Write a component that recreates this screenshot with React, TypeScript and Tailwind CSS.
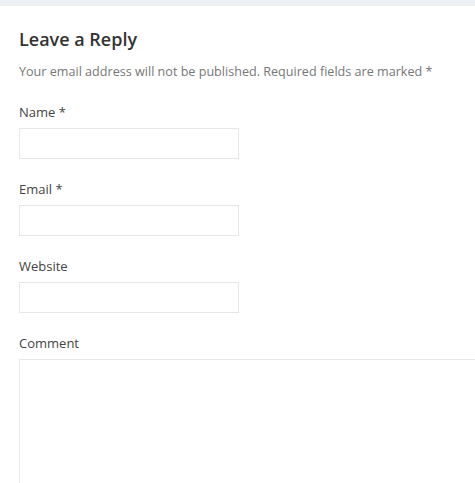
const fields = [
  { label: "Name", required: true },
  { label: "Email", required: true },
  { label: "Website", required: false },
];

export default function App() {
  const input = "block h-[31px] w-[220px] border border-[#e6e6e6] bg-white outline-none";

  return (
    <div className="min-h-[483px] overflow-hidden bg-white font-['Open_Sans',sans-serif] text-[13px] text-[#444]">
      <div className="h-[6px] bg-[#eef1f4]" />

      <div className="pl-[19px]">
        <h3 className="pt-[23px] text-[18px] font-semibold leading-[20px] text-[#333]">Leave a Reply</h3>
        <p className="mt-[13px] text-[12.6px] leading-[20px] text-[#777]">
          Your email address will not be published. Required fields are marked *
        </p>

        {fields.map((f) => (
          <div key={f.label} className="mt-[20px]">
            <label className="block leading-[20px] text-[#444]">
              {f.label}
              {f.required && " *"}
            </label>
            <input type="text" className={`${input} mt-[6px]`} />
          </div>
        ))}

        <div className="mt-[20px]">
          <label className="block leading-[20px] text-[#444]">Comment</label>
          <textarea className="mt-[6px] block h-[140px] w-[480px] resize-none border border-[#e6e6e6] outline-none" />
        </div>
      </div>
    </div>
  );
}
